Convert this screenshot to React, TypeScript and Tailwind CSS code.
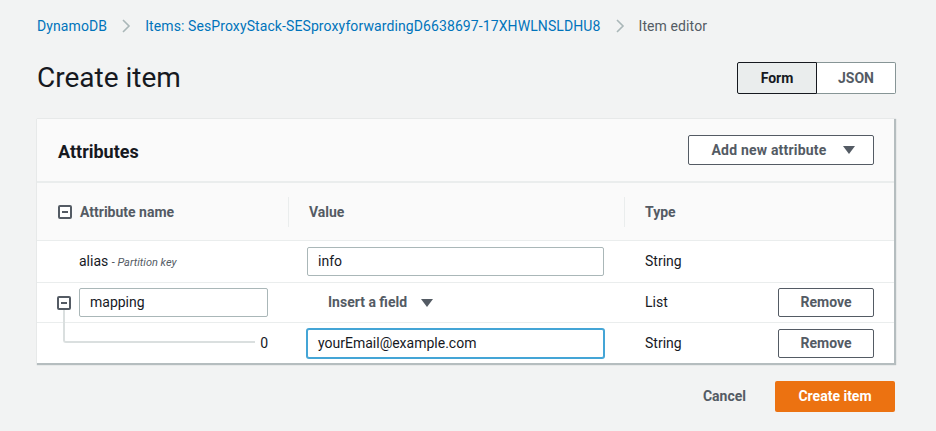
import React from "react";

const font = { fontFamily: "Roboto, 'Noto Sans', sans-serif" };

function MinusBox() {
  return (
    <span className="flex h-[14px] w-[14px] items-center justify-center rounded-[2px] border-2 border-[#545b64] bg-white">
      <span className="h-[2px] w-[6px] bg-[#545b64]" />
    </span>
  );
}

function Chevron() {
  return (
    <svg width="10" height="16" viewBox="0 0 10 16" className="mx-[14px]">
      <path d="M2 2 L8 8 L2 14" fill="none" stroke="#aab7b8" strokeWidth="1.6" />
    </svg>
  );
}

function Caret({ ml }: { ml: string }) {
  return (
    <svg width="12" height="8" viewBox="0 0 12 8" className={ml}>
      <path d="M0 0 H12 L6 8 Z" fill="#545b64" />
    </svg>
  );
}

function TextInput({ value, focus, w }: { value: string; focus?: boolean; w: string }) {
  return (
    <div
      className={`flex h-[29px] ${w} items-center rounded-[2px] bg-white px-[10px] text-[14px] text-[#16191f] ${
        focus ? "border border-[#44a5d6] ring-1 ring-[#44a5d6]" : "border border-[#aab7b8]"
      }`}
    >
      {value}
    </div>
  );
}

function RemoveBtn() {
  return (
    <button
      type="button"
      className="h-[29px] w-[96px] rounded-[2px] border border-[#545b64] bg-white text-[14px] font-bold text-[#545b64]"
    >
      Remove
    </button>
  );
}

export default function App() {
  return (
    <div className="h-[431px] w-[936px] overflow-hidden bg-[#f2f3f3] pl-[37px] pt-[16px] text-[#16191f]" style={font}>
      <div className="flex h-[20px] items-center text-[14px] leading-[20px] tracking-[0.1px]">
        <span className="text-[#0073bb]">DynamoDB</span>
        <Chevron />
        <span className="text-[#0073bb]">Items: SesProxyStack-SESproxyforwardingD6638697-17XHWLNSLDHU8</span>
        <Chevron />
        <span className="text-[#545b64]">Item editor</span>
      </div>

      <div className="mt-[26px] flex h-[32px] w-[859px] items-center justify-between">
        <h1 className="text-[28px] font-normal leading-[32px] text-[#16191f]">Create item</h1>
        <div className="flex h-[32px]">
          <button
            type="button"
            className="w-[80px] rounded-l-[2px] border border-[#16191f] bg-[#eaeded] text-[14px] font-bold text-[#16191f]"
          >
            Form
          </button>
          <button
            type="button"
            className="w-[79px] rounded-r-[2px] border border-l-0 border-[#879596] bg-white text-[14px] font-bold text-[#545b64]"
          >
            JSON
          </button>
        </div>
      </div>

      <div className="mt-[25px] w-[857px] bg-white shadow-[1px_1px_1px_1px_rgba(0,28,36,0.25)]">
        <div className="flex h-[64px] items-center justify-between border-b-2 border-[#eaeded] bg-[#fafafa] pl-[21px] pr-[20px]">
          <div className="pt-[2px] text-[18px] font-bold">Attributes</div>
          <button
            type="button"
            className="flex h-[30px] w-[186px] items-center justify-center rounded-[2px] border border-[#545b64] bg-white pl-[4px] text-[14px] font-bold tracking-[0.2px] text-[#545b64]"
          >
            Add new attribute
            <Caret ml="ml-[16px]" />
          </button>
        </div>

        <div className="flex h-[58px] items-center border-b border-[#eaeded] bg-[#fafafa] text-[14px] font-bold text-[#545b64]">
          <div className="flex w-[252px] items-center gap-[8px] border-r border-[#eaeded] pl-[21px] leading-[30px]">
            <MinusBox />
            Attribute name
          </div>
          <div className="w-[336px] border-r border-[#eaeded] pl-[20px] leading-[30px]">Value</div>
          <div className="pl-[20px] leading-[30px]">Type</div>
        </div>

        <div className="flex h-[42px] items-center border-b border-[#eaeded] text-[14px]">
          <div className="w-[252px] pl-[42px]">
            alias <span className="text-[11px] italic text-[#545b64]">- Partition key</span>
          </div>
          <div className="w-[336px] pl-[18px]">
            <TextInput value="info" w="w-[297px]" />
          </div>
          <div className="pl-[20px]">String</div>
        </div>

        <div className="flex h-[40px] items-center border-b border-[#eaeded] text-[14px]">
          <div className="flex w-[252px] items-center gap-[8px] pl-[20px]">
            <MinusBox />
            <TextInput value="mapping" w="w-[189px]" />
          </div>
          <div className="flex w-[336px] items-center pl-[39px] font-bold text-[#545b64]">
            Insert a field
            <Caret ml="ml-[14px]" />
          </div>
          <div className="w-[153px] pl-[20px]">List</div>
          <RemoveBtn />
        </div>

        <div className="relative flex h-[40px] items-center text-[14px]">
          <span className="absolute left-[26px] top-[-13px] h-[33px] w-[192px] rounded-bl-[3px] border-b-2 border-l-2 border-[#dadfdf]" />
          <div className="flex w-[252px] items-center justify-end pr-[21px]">0</div>
          <div className="w-[336px] pl-[18px]">
            <TextInput value="yourEmail@example.com" w="w-[297px]" focus />
          </div>
          <div className="w-[153px] pl-[20px]">String</div>
          <RemoveBtn />
        </div>
      </div>

      <div className="mt-[18px] flex w-[858px] items-center justify-end">
        <span className="mr-[29px] text-[14px] font-bold text-[#545b64]">Cancel</span>
        <button
          type="button"
          className="h-[31px] w-[120px] rounded-[2px] bg-[#ec7211] text-[14px] font-bold text-white"
        >
          Create item
        </button>
      </div>
    </div>
  );
}
